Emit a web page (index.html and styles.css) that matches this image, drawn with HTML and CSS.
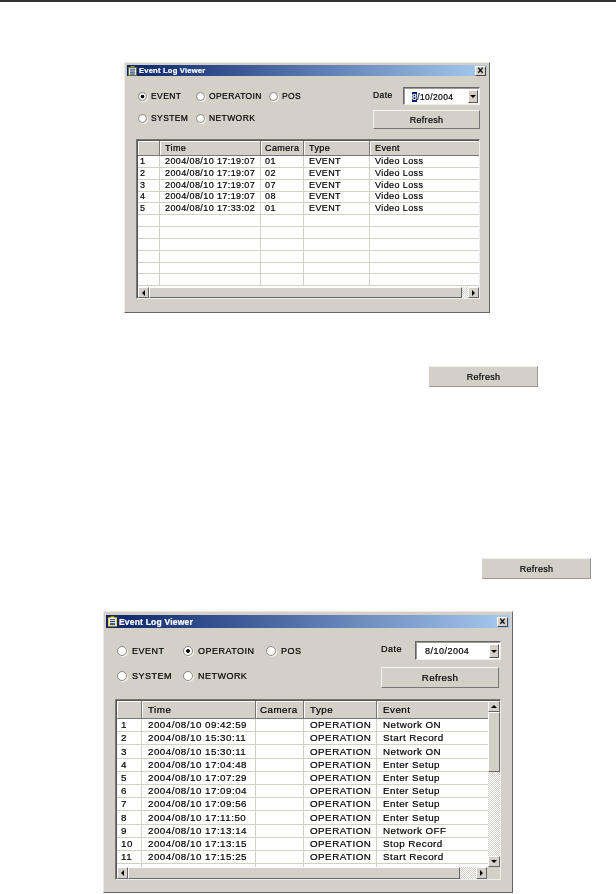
FILE: index.html
```html
<!DOCTYPE html>
<html lang="en">
<head>
<meta charset="utf-8">
<title>Event Log Viewer</title>
<link rel="stylesheet" href="styles.css">
</head>
<body>
<div class="rule"></div>

<section class="window win-a">
  <header class="titlebar">
    <svg class="ticon" viewBox="0 0 10 11"><rect x="3" y="0" width="4" height="2" fill="#9fb04a"/><rect x="0.5" y="1.5" width="9" height="9" fill="#fff" stroke="#5f6a2a"/><path d="M2 3.5h6M2 5.5h6M2 7.5h6M2 9h6" stroke="#0a246a" fill="none"/></svg>
    <span class="ttext">Event Log Viewer</span>
    <span class="close">×</span>
  </header>
  <div class="controls">
    <div class="radios">
      <label class="radio on">EVENT</label>
      <label class="radio">OPERATOIN</label>
      <label class="radio">POS</label>
      <label class="radio">SYSTEM</label>
      <label class="radio">NETWORK</label>
    </div>
    <div class="side">
      <div class="date-row">
        <span class="date-label">Date</span>
        <div class="date-field"><span class="date-val"><span class="hl">8</span>/10/2004</span><span class="drop"><i class="tri-d"></i></span></div>
      </div>
      <button class="btn side-btn">Refresh</button>
    </div>
  </div>
  <div class="grid">
    <div class="grid-view">
      <div class="grid-clip">
        <table class="log">
          <thead><tr><th></th><th>Time</th><th>Camera</th><th>Type</th><th>Event</th></tr></thead>
          <tbody>
            <tr><td>1</td><td>2004/08/10 17:19:07</td><td>01</td><td>EVENT</td><td>Video Loss</td></tr>
            <tr><td>2</td><td>2004/08/10 17:19:07</td><td>02</td><td>EVENT</td><td>Video Loss</td></tr>
            <tr><td>3</td><td>2004/08/10 17:19:07</td><td>07</td><td>EVENT</td><td>Video Loss</td></tr>
            <tr><td>4</td><td>2004/08/10 17:19:07</td><td>08</td><td>EVENT</td><td>Video Loss</td></tr>
            <tr><td>5</td><td>2004/08/10 17:33:02</td><td>01</td><td>EVENT</td><td>Video Loss</td></tr>
            <tr><td></td><td></td><td></td><td></td><td></td></tr>
            <tr><td></td><td></td><td></td><td></td><td></td></tr>
            <tr><td></td><td></td><td></td><td></td><td></td></tr>
            <tr><td></td><td></td><td></td><td></td><td></td></tr>
            <tr><td></td><td></td><td></td><td></td><td></td></tr>
            <tr><td></td><td></td><td></td><td></td><td></td></tr>
          </tbody>
        </table>
      </div>
    </div>
    <div class="hbar"><span class="sb-btn"><i class="tri-l"></i></span><span class="sb-thumb"></span><span class="sb-track"></span><span class="sb-btn"><i class="tri-r"></i></span></div>
  </div>
</section>

<div class="inline-btn inline-a"><button class="btn">Refresh</button></div>
<div class="inline-btn inline-b"><button class="btn">Refresh</button></div>

<section class="window win-b">
  <header class="titlebar">
    <svg class="ticon" viewBox="0 0 10 11"><rect x="3" y="0" width="4" height="2" fill="#ffe600"/><rect x="0.5" y="1.5" width="9" height="9" fill="#fff" stroke="#ffe600"/><path d="M2 3.5h6M2 5.5h6M2 7.5h6M2 9h6" stroke="#0a246a" fill="none"/></svg>
    <span class="ttext">Event Log Viewer</span>
    <span class="close">×</span>
  </header>
  <div class="controls">
    <div class="radios">
      <label class="radio">EVENT</label>
      <label class="radio on">OPERATOIN</label>
      <label class="radio">POS</label>
      <label class="radio">SYSTEM</label>
      <label class="radio">NETWORK</label>
    </div>
    <div class="side">
      <div class="date-row">
        <span class="date-label">Date</span>
        <div class="date-field"><span class="date-val">8/10/2004</span><span class="drop"><i class="tri-d"></i></span></div>
      </div>
      <button class="btn side-btn">Refresh</button>
    </div>
  </div>
  <div class="grid">
    <div class="grid-main">
      <div class="grid-view">
        <div class="grid-clip">
          <table class="log">
            <thead><tr><th></th><th>Time</th><th>Camera</th><th>Type</th><th>Event</th></tr></thead>
            <tbody>
              <tr><td>1</td><td>2004/08/10 09:42:59</td><td></td><td>OPERATION</td><td>Network ON</td></tr>
              <tr><td>2</td><td>2004/08/10 15:30:11</td><td></td><td>OPERATION</td><td>Start Record</td></tr>
              <tr><td>3</td><td>2004/08/10 15:30:11</td><td></td><td>OPERATION</td><td>Network ON</td></tr>
              <tr><td>4</td><td>2004/08/10 17:04:48</td><td></td><td>OPERATION</td><td>Enter Setup</td></tr>
              <tr><td>5</td><td>2004/08/10 17:07:29</td><td></td><td>OPERATION</td><td>Enter Setup</td></tr>
              <tr><td>6</td><td>2004/08/10 17:09:04</td><td></td><td>OPERATION</td><td>Enter Setup</td></tr>
              <tr><td>7</td><td>2004/08/10 17:09:56</td><td></td><td>OPERATION</td><td>Enter Setup</td></tr>
              <tr><td>8</td><td>2004/08/10 17:11:50</td><td></td><td>OPERATION</td><td>Enter Setup</td></tr>
              <tr><td>9</td><td>2004/08/10 17:13:14</td><td></td><td>OPERATION</td><td>Network OFF</td></tr>
              <tr><td>10</td><td>2004/08/10 17:13:15</td><td></td><td>OPERATION</td><td>Stop Record</td></tr>
              <tr><td>11</td><td>2004/08/10 17:15:25</td><td></td><td>OPERATION</td><td>Start Record</td></tr>
              <tr><td></td><td></td><td></td><td></td><td></td></tr>
            </tbody>
          </table>
        </div>
      </div>
      <div class="vbar"><span class="sb-btn"><i class="tri-u"></i></span><span class="sb-vthumb"></span><span class="sb-vtrack"></span><span class="sb-btn"><i class="tri-d"></i></span></div>
    </div>
    <div class="hbar"><span class="sb-btn"><i class="tri-l"></i></span><span class="sb-thumb"></span><span class="sb-track"></span><span class="sb-btn"><i class="tri-r"></i></span><span class="sb-corner"></span></div>
  </div>
</section>
</body>
</html>
```
FILE: styles.css
```css
* { box-sizing: border-box; }
html, body { margin: 0; padding: 0; background: #fff; }
body {
  width: 616px;
  height: 894px;
  overflow: hidden;
  font-family: "Liberation Sans", Arial, sans-serif;
  color: #000;
  -webkit-text-stroke: .2px currentColor;
}
.rule { height: 2px; background: #333; }

.window {
  background: #d4d0c8;
  border: 1px solid;
  border-color: #eceae6 #666 #666 #eceae6;
  padding: 2px;
  display: flex;
  flex-direction: column;
}
.win-a {
  --fs: 8.5px; --tfs: 9px; --ls: .4px; --row: 11.85px; --head: 15px; --bar: 11px; --radio: 7px;
  --c0: 22px; --c1: 101px; --c2: 43px; --c3: 66px; --pad: 5px; --npad: 2px;
  margin: 60px 0 0 124px;
  width: 366px;
  height: 251px;
}
.win-b {
  --fs: 9px; --tfs: 9.8px; --ls: .48px; --row: 13.2px; --head: 18px; --bar: 12px; --radio: 8px;
  --c0: 25px; --c1: 114px; --c2: 48px; --c3: 73px; --pad: 6px; --npad: 4px;
  margin: 32px 0 0 103px;
  width: 410px;
  height: 282px;
  padding-top: 3px;
}

.titlebar {
  display: flex;
  align-items: center;
  gap: 2px;
  height: 11px;
  padding: 0 1px;
  background: linear-gradient(90deg, #0a246a, #a6caf0);
  color: #fff;
  font-size: 7.6px;
  font-weight: 700;
  letter-spacing: .2px;
  flex: none;
}
.win-b .titlebar { height: 13px; font-size: 8.5px; padding: 0 2px; }
.ticon { width: 9px; height: 10px; flex: none; }
.win-b .ticon { width: 9px; height: 11px; }
.ttext { flex: 1; }
.close {
  width: 11px; height: 10px;
  background: #d4d0c8;
  border: 1px solid; border-color: #fff #444 #444 #fff;
  color: #000;
  font-size: 10px; line-height: 7px; text-align: center; letter-spacing: 0;
}

.controls {
  display: flex;
  justify-content: space-between;
  flex: none;
  padding: 10px 7px 0 11px;
  font-size: var(--fs);
  letter-spacing: var(--ls);
}
.win-b .controls { padding: 13px 11px 0 11px; }

.radios {
  display: grid;
  grid-template-columns: 58px 73px auto;
  grid-auto-rows: 22px;
  align-content: start;
}
.win-b .radios { grid-template-columns: 66px 83px auto; grid-auto-rows: 25px; }
.radio { display: flex; align-items: center; gap: 4px; white-space: nowrap; height: 20px; }
.win-b .radio { gap: 5px; }
.radio::before {
  content: "";
  flex: none;
  width: var(--radio); height: var(--radio);
  border-radius: 50%;
  background: #fff;
  border: 1px solid #8a8780;
  box-shadow: 1px 1px 0 #f4f3f0;
}
.radio.on::before { background: radial-gradient(circle, #111 0 1.6px, #fff 2.2px); }

.side { display: flex; flex-direction: column; gap: 5px; width: 107px; margin-top: 1px; }
.win-b .side { width: 118px; gap: 7px; margin-top: 0; }
.date-row { display: flex; align-items: center; justify-content: space-between; height: 18px; }
.win-b .date-row { height: 19px; }
.date-label { padding-bottom: 2px; }
.win-b .date-label { padding-bottom: 4px; }
.date-field {
  display: flex;
  width: 77px; height: 100%;
  background: #fff;
  border: 1px solid; border-color: #666 #eee #eee #666;
  box-shadow: inset 1px 1px 0 #999;
  align-items: center;
  padding: 2px 1px 1px 0;
}
.win-b .date-field { width: 86px; margin-right: -2px; }
.date-val { flex: 1; padding-left: 8px; }
.win-b .date-val { padding-left: 9px; }
.hl { background: #0a246a; color: #fff; }
.drop {
  width: 10px; height: 100%;
  background: #d4d0c8;
  border: 1px solid; border-color: #fff #555 #555 #fff;
  display: flex; align-items: center; justify-content: center;
}

.btn {
  display: block;
  margin: 0; padding: 0;
  height: 19px;
  width: 100%;
  background: #d4d0c8;
  border: 1px solid; border-color: #f4f3f0 #777 #777 #f4f3f0;
  font: inherit;
  font-size: var(--tfs);
  letter-spacing: .3px;
  color: #000;
}
.win-b .btn { height: 21px; }

.grid {
  margin: 9px 7px 0 9px;
  height: 160px;
  border: 1px solid; border-color: #777 #eee #eee #777;
  box-shadow: inset 1px 1px 0 #555;
  padding: 1px 0 0 1px;
  background: #fff;
  display: flex;
  flex-direction: column;
  font-size: var(--tfs);
  letter-spacing: var(--ls);
}
.win-b .grid { margin: 8px 9px 0 9px; height: 181px; }
.grid-main { flex: 1; min-height: 0; display: flex; }
.grid-view { flex: 1; min-height: 0; min-width: 0; overflow: hidden; }
.grid-clip { height: 100%; overflow: hidden; }

.log { border-collapse: separate; border-spacing: 0; table-layout: fixed; width: 100%; }
.log th:nth-child(1), .log td:nth-child(1) { width: var(--c0); }
.log th:nth-child(2), .log td:nth-child(2) { width: var(--c1); }
.log th:nth-child(3), .log td:nth-child(3) { width: var(--c2); }
.log th:nth-child(4), .log td:nth-child(4) { width: var(--c3); }
.log th {
  height: var(--head);
  background: #d4d0c8;
  border-right: 1px solid #777;
  border-bottom: 1px solid #777;
  box-shadow: inset 1px 1px 0 #fff;
  text-align: left;
  font-weight: 400;
  padding: 0 0 0 var(--pad);
}
.log th:nth-child(3) { padding-left: 4px; }
.log th:last-child { border-right: 0; }
.log td {
  height: var(--row);
  padding: 0 0 0 var(--pad);
  border-right: 1px solid #d4d0c8;
  border-bottom: 1px solid #d4d0c8;
  white-space: nowrap;
  overflow: hidden;
  line-height: 1;
}
.log td:nth-child(3) { padding-left: 4px; }
.log td:last-child { border-right: 0; }
.log td:first-child { padding-left: var(--npad); }

.hbar { display: flex; height: var(--bar); flex: none; background: #d4d0c8; }
.vbar { display: flex; flex-direction: column; width: 12px; flex: none; background: #d4d0c8; }
.sb-btn {
  flex: none;
  width: 11px; height: var(--bar);
  background: #d4d0c8;
  border: 1px solid; border-color: #fff #666 #666 #fff;
  display: flex; align-items: center; justify-content: center;
}
.vbar .sb-btn { width: 12px; height: 11px; }
.sb-thumb {
  flex: 1;
  background: #d4d0c8;
  border: 1px solid; border-color: #fff #666 #666 #fff;
}
.sb-track {
  flex: none;
  width: 6px;
  background: repeating-conic-gradient(#d4d0c8 0 25%, #fff 0 50%) 0 0 / 2px 2px;
}
.win-b .sb-track { width: 16px; }
.sb-corner { flex: none; width: 13px; background: #d4d0c8; }
.sb-vthumb {
  flex: none; height: 60px;
  background: #d4d0c8;
  border: 1px solid; border-color: #fff #666 #666 #fff;
}
.sb-vtrack {
  flex: 1;
  background: repeating-conic-gradient(#d4d0c8 0 25%, #fff 0 50%) 0 0 / 2px 2px;
}
.tri-d, .tri-u, .tri-l, .tri-r { display: block; width: 0; height: 0; border: 3px solid transparent; }
.tri-d { border-top-color: #000; border-bottom-width: 0; }
.tri-u { border-bottom-color: #000; border-top-width: 0; }
.tri-l { border-right-color: #000; border-left-width: 0; }
.tri-r { border-left-color: #000; border-right-width: 0; }

.inline-btn { width: 109px; --tfs: 9px; }
.inline-btn .btn { height: 21px; border-color: #eee #999 #999 #d4d0c8; }
.inline-a { margin: 53px 0 0 429px; }
.inline-b { margin: 171px 0 0 482px; }
.win-a, .win-b, .inline-btn { filter: blur(.3px); }
```
